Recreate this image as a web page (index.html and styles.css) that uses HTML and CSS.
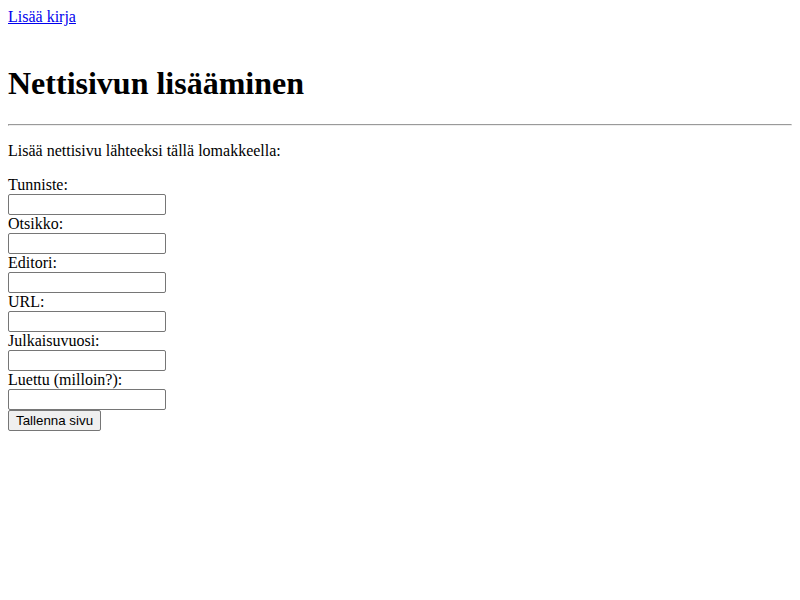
FILE: index.html
```html
<!DOCTYPE html>
<html lang="fi">
<head>
<meta charset="utf-8">
<title>Nettisivun lisääminen</title>
<link rel="stylesheet" href="styles.css">
</head>
<body>
<div class="top"><a href="#">Lisää kirja</a></div>
<h1>Nettisivun lisääminen</h1>
<hr>
<p>Lisää nettisivu lähteeksi tällä lomakkeella:</p>
<form class="form">
Tunniste:<br>
<input type="text" class="field"><br>
Otsikko:<br>
<input type="text" class="field"><br>
Editori:<br>
<input type="text" class="field"><br>
URL:<br>
<input type="text" class="field"><br>
Julkaisuvuosi:<br>
<input type="text" class="field"><br>
Luettu (milloin?):<br>
<input type="text" class="field"><br>
<button type="button" class="btn">Tallenna sivu</button>
</form>
</body>
</html>
```
FILE: styles.css
```css
body {
  font-family: "Liberation Serif", serif;
  font-size: 16px;
  margin: 8px;
  color: #000;
}
.top {
  padding-bottom: 18px;
}
.top a {
  color: #0000ee;
}
h1 {
  font-size: 32px;
  margin: 21.44px 0;
}
.field {
  font-family: "Liberation Sans", sans-serif;
  font-size: 13.33px;
  width: 158px;
  height: 21px;
  box-sizing: border-box;
  margin: 0;
  padding: 1px 2px;
  border: 1px solid #767676;
  border-radius: 2px;
}
.btn {
  font-family: "Liberation Sans", sans-serif;
  font-size: 13.33px;
  margin: 0;
  padding: 1px 7px;
  height: 21px;
  border: 1px solid #767676;
  border-radius: 2px;
  background: #efefef;
  color: #000;
}
```
